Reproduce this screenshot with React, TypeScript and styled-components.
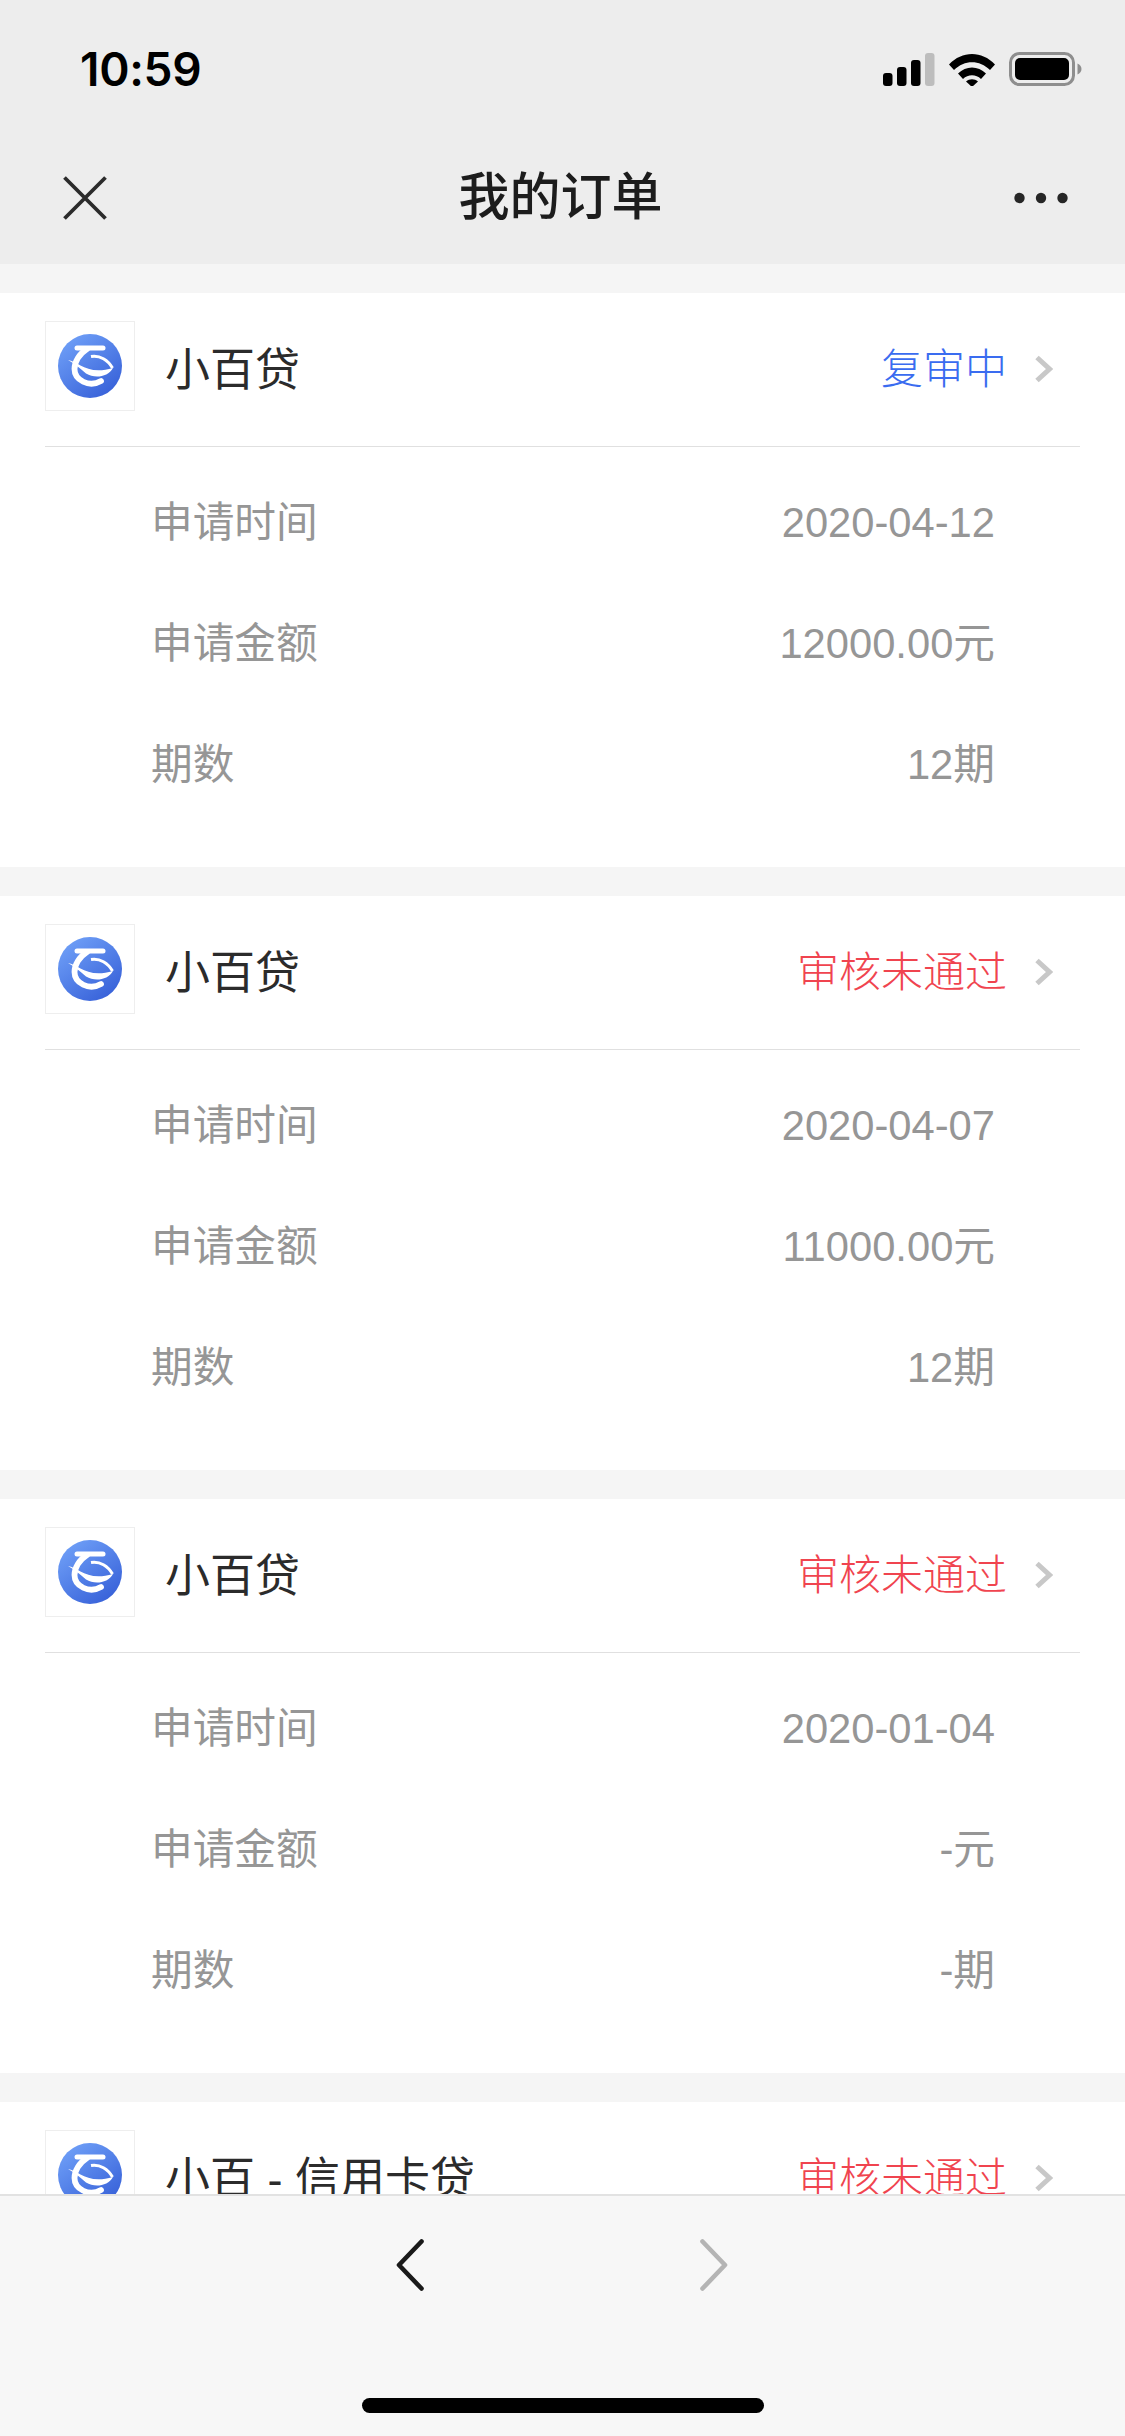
import React from 'react';
import styled, { createGlobalStyle } from 'styled-components';

const GlobalStyle = createGlobalStyle`
  html, body {
    margin: 0;
    padding: 0;
    background: #f5f5f5;
  }
  * {
    box-sizing: border-box;
  }
`;

const CJK = `"Liberation Sans", "Noto Sans CJK SC", sans-serif`;

const Page = styled.div`
  width: 1125px;
  height: 2436px;
  display: flex;
  flex-direction: column;
  overflow: hidden;
  font-family: ${CJK};
  background: #f5f5f5;
`;

const Header = styled.header`
  flex: none;
  height: 264px;
  background: #ededed;
`;

const StatusBar = styled.div`
  height: 132px;
  padding: 46px 43px 0 80px;
  display: flex;
  justify-content: space-between;
  align-items: flex-start;
`;

const Clock = styled.span`
  font-family: Inter, sans-serif;
  font-size: 46px;
  line-height: 46px;
  font-weight: 600;
  color: #000;
  letter-spacing: -0.3px;
`;

const StatusIcons = styled.div`
  margin-top: 6px;
  display: flex;
  gap: 14px;
  align-items: center;
`;

const NavBar = styled.nav`
  height: 132px;
  padding: 0 57px 0 63px;
  display: flex;
  align-items: center;
  justify-content: space-between;
`;

const Title = styled.h1`
  margin: 0;
  font-size: 51px;
  line-height: 60px;
  font-weight: 500;
  color: #1c1c1c;
`;

const List = styled.main`
  flex: 1;
  min-height: 0;
  overflow: hidden;
  padding-top: 29px;
`;

const Card = styled.section`
  background: #fff;
  margin-bottom: 29px;
  height: 574px;
`;

const CardHead = styled.div`
  height: 154px;
  margin: 0 45px;
  padding-top: 28px;
  border-bottom: 1px solid #e0e0e0;
  display: flex;
  align-items: flex-start;
`;

const LogoBox = styled.div`
  width: 90px;
  height: 90px;
  flex: none;
  border: 1px solid #eeeeee;
  display: flex;
  align-items: center;
  justify-content: center;
`;

const Name = styled.span`
  margin-left: 30px;
  flex: 1;
  font-size: 45px;
  line-height: 99px;
  font-weight: 400;
  color: #2b2b2b;
`;

const Status = styled.span<{ $tone: 'review' | 'rejected' }>`
  font-size: 42px;
  line-height: 98px;
  font-weight: 300;
  color: ${(p) => (p.$tone === 'review' ? '#3a6cf0' : '#f0444f')};
`;

const ChevronSlot = styled.span`
  margin: 3px 27px 0 27px;
  height: 90px;
  display: flex;
  align-items: center;
`;

const Rows = styled.div`
  padding: 15px 130px 0 151px;
`;

const Row = styled.div`
  height: 121px;
  display: flex;
  align-items: center;
  justify-content: space-between;
  font-size: 41.7px;
  line-height: 60px;
  font-weight: 400;
  color: #969696;
`;

const Footer = styled.footer`
  flex: none;
  height: 242px;
  background: #f7f7f7;
  border-top: 2px solid #e2e2e2;
  display: flex;
  flex-direction: column;
  align-items: center;
`;

const FooterNav = styled.div`
  margin-top: 43px;
  display: flex;
  gap: 276px;
  margin-left: -1px;
`;

const HomeBar = styled.div`
  margin-top: 107px;
  width: 402px;
  height: 15px;
  border-radius: 8px;
  background: #000;
`;

const SignalIcon = () => (
  <svg width="52" height="33" viewBox="0 0 52 33">
    <rect x="0" y="20" width="9.5" height="13" rx="3" fill="#000" />
    <rect x="14" y="14" width="9.5" height="19" rx="3" fill="#000" />
    <rect x="28" y="7" width="9.5" height="26" rx="3" fill="#000" />
    <rect x="42" y="0" width="9.5" height="33" rx="3" fill="#bdbdbd" />
  </svg>
);

const WifiIcon = () => (
  <svg width="46" height="33" viewBox="0 0 46 33">
    <path d="M0 11.5 C13 -2.5 33 -2.5 46 11.5 L41 17 C30.5 6.5 15.5 6.5 5 17 Z" fill="#000" />
    <path d="M9 20.5 C17 12.5 29 12.5 37 20.5 L32 26 C27 21 19 21 14 26 Z" fill="#000" />
    <path d="M17 28.5 C20.5 25.5 25.5 25.5 29 28.5 L23 34 Z" fill="#000" />
  </svg>
);

const BatteryIcon = () => (
  <svg width="73" height="34" viewBox="0 0 73 34">
    <rect x="1.5" y="1.5" width="63" height="31" rx="9" fill="none" stroke="#8e8e8e" strokeWidth="3" />
    <rect x="6" y="6" width="54" height="22" rx="5" fill="#000" />
    <path d="M68.5 11.5 C71 12.5 72.5 14.5 72.5 17 C72.5 19.5 71 21.5 68.5 22.5 Z" fill="#8e8e8e" />
  </svg>
);

const CloseIcon = () => (
  <svg width="44" height="44" viewBox="0 0 44 44">
    <path d="M1.5 1.5 L42.5 42.5 M42.5 1.5 L1.5 42.5" stroke="#2b2b2b" strokeWidth="3.8" fill="none" />
  </svg>
);

const MoreIcon = () => (
  <svg width="54" height="12" viewBox="0 0 54 12">
    <circle cx="5.5" cy="6" r="5.2" fill="#262626" />
    <circle cx="27" cy="6" r="5.2" fill="#262626" />
    <circle cx="48.5" cy="6" r="5.2" fill="#262626" />
  </svg>
);

const RowChevron = () => (
  <svg width="19" height="28" viewBox="0 0 19 28">
    <path d="M3 2.5 L15.5 14 L3 25.5" stroke="#c8c8c8" strokeWidth="5" fill="none" />
  </svg>
);

const NavArrow = ({ back }: { back?: boolean }) => (
  <svg width="28" height="52" viewBox="0 0 28 52">
    <path
      d={back ? 'M25.5 2.5 L3 26 L25.5 49.5' : 'M2.5 2.5 L25 26 L2.5 49.5'}
      stroke={back ? '#1a1a1a' : '#b4b4b4'}
      strokeWidth="4.6"
      strokeLinecap="round"
      strokeLinejoin="round"
      fill="none"
    />
  </svg>
);

// 小百 logo: blue disc with a white bar, an open C and a swoosh across it
const Logo = ({ id }: { id: string }) => (
  <svg width="64" height="64" viewBox="0 0 64 64">
    <defs>
      <linearGradient id={id} x1="0.2" y1="0.1" x2="0.8" y2="0.9">
        <stop offset="0" stopColor="#6b9bf5" />
        <stop offset="1" stopColor="#3a64da" />
      </linearGradient>
    </defs>
    <circle cx="32" cy="32" r="32" fill={`url(#${id})`} />
    <path d="M19 14 H45" stroke="#fff" strokeWidth="5" strokeLinecap="round" fill="none" />
    <path d="M29 15 C21 20 16.5 28 16.5 35 C16.5 46 31 54 43 47" stroke="#fff" strokeWidth="5.8" strokeLinecap="round" fill="none" />
    <path d="M10 26 C20 27 29 42 55 34 C50 43 37 45 28 39.5 C22 34.5 17 29.5 10 26 Z" fill="#fff" />
    <path d="M33 22.5 C42 21 50 26 54.5 34" stroke="#fff" strokeWidth="3" fill="none" />
  </svg>
);

type Order = {
  id: string;
  name: string;
  status: string;
  tone: 'review' | 'rejected';
  date: string;
  amount: string;
  term: string;
};

const orders: Order[] = [
  { id: 'a', name: '小百贷', status: '复审中', tone: 'review', date: '2020-04-12', amount: '12000.00元', term: '12期' },
  { id: 'b', name: '小百贷', status: '审核未通过', tone: 'rejected', date: '2020-04-07', amount: '11000.00元', term: '12期' },
  { id: 'c', name: '小百贷', status: '审核未通过', tone: 'rejected', date: '2020-01-04', amount: '-元', term: '-期' },
  { id: 'd', name: '小百 - 信用卡贷', status: '审核未通过', tone: 'rejected', date: '2019-12-20', amount: '-元', term: '-期' },
];

export default function App() {
  return (
    <Page>
      <GlobalStyle />
      <Header>
        <StatusBar>
          <Clock>10:59</Clock>
          <StatusIcons>
            <SignalIcon />
            <WifiIcon />
            <BatteryIcon />
          </StatusIcons>
        </StatusBar>
        <NavBar>
          <CloseIcon />
          <Title>我的订单</Title>
          <MoreIcon />
        </NavBar>
      </Header>
      <List>
        {orders.map((order) => (
          <Card key={order.id}>
            <CardHead>
              <LogoBox>
                <Logo id={`logo-${order.id}`} />
              </LogoBox>
              <Name>{order.name}</Name>
              <Status $tone={order.tone}>{order.status}</Status>
              <ChevronSlot>
                <RowChevron />
              </ChevronSlot>
            </CardHead>
            <Rows>
              <Row>
                <span>申请时间</span>
                <span>{order.date}</span>
              </Row>
              <Row>
                <span>申请金额</span>
                <span>{order.amount}</span>
              </Row>
              <Row>
                <span>期数</span>
                <span>{order.term}</span>
              </Row>
            </Rows>
          </Card>
        ))}
      </List>
      <Footer>
        <FooterNav>
          <NavArrow back />
          <NavArrow />
        </FooterNav>
        <HomeBar />
      </Footer>
    </Page>
  );
}
